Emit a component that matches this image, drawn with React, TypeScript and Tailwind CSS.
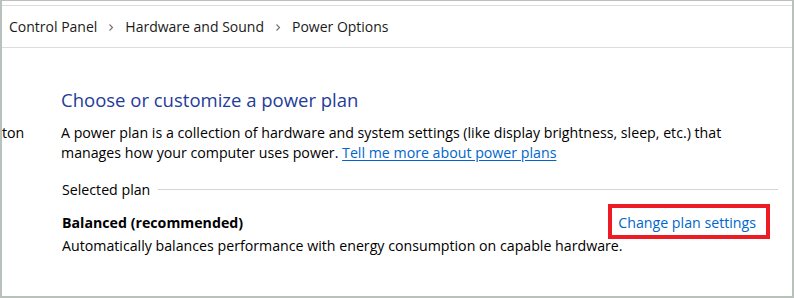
import React from "react";

function Chevron() {
  return (
    <svg width="6" height="9" viewBox="0 0 6 9" className="mx-[11px] mt-[1px]">
      <path d="M1.5 1.5 L4.5 4.5 L1.5 7.5" fill="none" stroke="#707070" strokeWidth="1.1" />
    </svg>
  );
}

export default function App() {
  const font = { fontFamily: '"Open Sans", "Noto Sans", sans-serif' };
  return (
    <div
      className="w-[794px] h-[298px] bg-white border-l-2 border-r-2 border-b-2 border-t border-[#b9c1bd] flex flex-col text-black overflow-hidden"
      style={font}
    >
      <div className="h-[4px] shrink-0" />
      <div className="h-[43px] shrink-0 border-t border-b border-[#dcdcdc] flex items-center pl-[7px] text-[14px] text-[#1a1a1a]">
        <span>Control Panel</span>
        <Chevron />
        <span>Hardware and Sound</span>
        <Chevron />
        <span>Power Options</span>
      </div>
      <div className="flex flex-1">
        <div className="w-[59px] shrink-0 overflow-hidden pt-[75px] text-[14.2px] leading-[20px] whitespace-nowrap">
          ton
        </div>
        <div className="flex-1 pr-[14px] pt-[38px]">
          <div className="text-[18.5px] leading-[28px] text-[#1f3c9a]">Choose or customize a power plan</div>
          <div className="mt-[9px] text-[14.2px] leading-[20px]">
            A power plan is a collection of hardware and system settings (like display brightness, sleep, etc.) that
            <br />
            manages how your computer uses power.{" "}
            <span className="text-[#0066cc] underline underline-offset-2">Tell me more about power plans</span>
          </div>
          <div className="mt-[17px] flex items-center text-[14.2px] leading-[20px] pl-[1px]">
            <span className="pr-[8px]">Selected plan</span>
            <div className="flex-1 h-px bg-[#d5d5d5] mt-[-2px]" />
          </div>
          <div className="mt-[13px] flex items-start justify-between pl-[1px]">
            <div className="text-[14.2px] leading-[20px] font-bold">Balanced (recommended)</div>
            <div className="-mt-[9px] -mb-[6px] mr-[8px] border-4 border-[#ed1c24] pl-[6px] pr-[10px] pt-[5px] pb-[2px] text-[14.2px] leading-[20px] text-[#0066cc]">
              Change plan settings
            </div>
          </div>
          <div className="mt-[3px] pl-[1px] text-[14.2px] leading-[20px]">
            Automatically balances performance with energy consumption on capable hardware.
          </div>
        </div>
      </div>
    </div>
  );
}
